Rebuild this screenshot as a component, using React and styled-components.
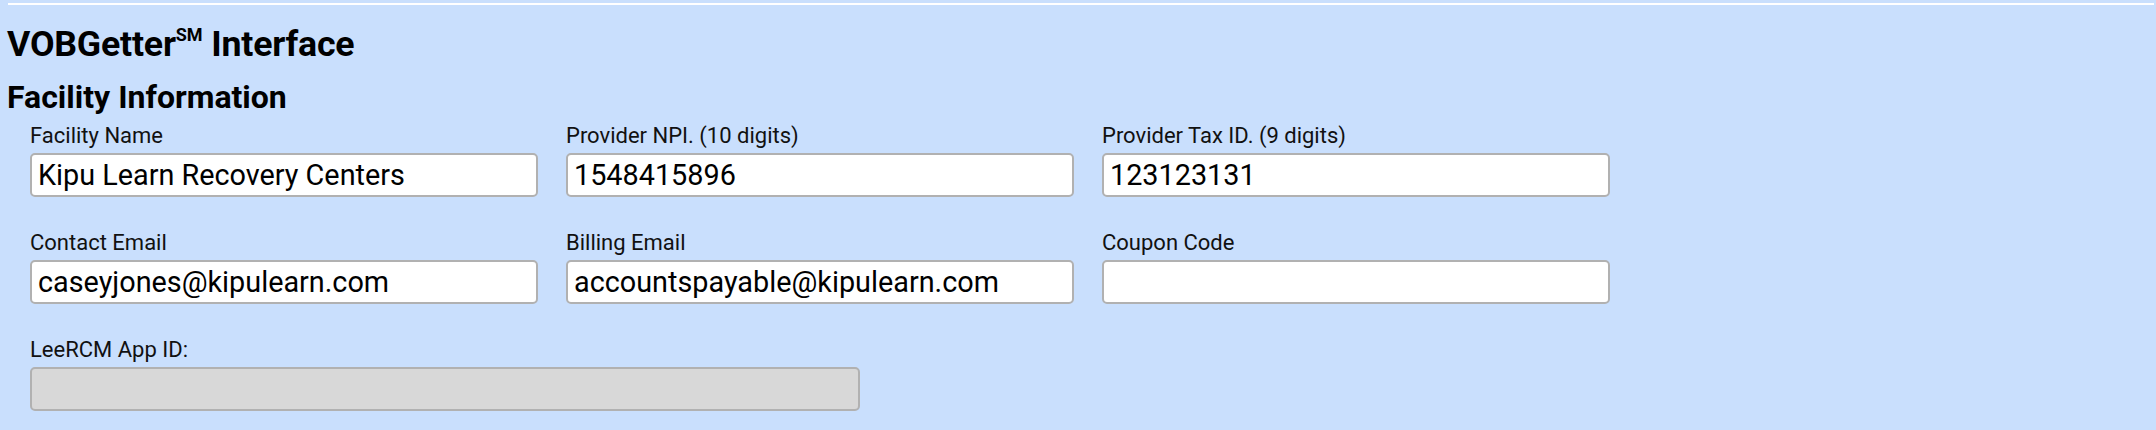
import React from 'react';
import styled, { createGlobalStyle } from 'styled-components';

const GlobalStyle = createGlobalStyle`
  html, body {
    margin: 0;
    padding: 0;
    background: #c9dffd;
  }
  body {
    font-family: Roboto, "Liberation Sans", sans-serif;
    color: #000;
  }
`;

const Page = styled.div`
  background: #c9dffd;
  min-height: 430px;
  padding: 3px 2px 0 8px;
  box-sizing: border-box;
`;

const TopRule = styled.div`
  height: 2px;
  background: #fff;
`;

const Title = styled.h1`
  margin: 18px 0 0 -1px;
  font-size: 35.7px;
  font-weight: 700;
  line-height: 42px;
  letter-spacing: -0.2px;

  sup {
    font-size: 18px;
    line-height: 0;
    vertical-align: 15px;
    letter-spacing: 0;
  }
`;

const SectionTitle = styled.h2`
  margin: 14px 0 0 -1px;
  font-size: 32px;
  font-weight: 700;
  line-height: 37px;
`;

const Fields = styled.div`
  display: grid;
  grid-template-columns: repeat(3, 508px);
  column-gap: 28px;
  row-gap: 34px;
  padding: 8px 0 0 22px;
`;

const Field = styled.div`
  display: flex;
  flex-direction: column;
  grid-column: ${(p) => (p.$wide ? '1 / span 2' : 'auto')};
  width: ${(p) => (p.$wide ? '830px' : '508px')};
`;

const Label = styled.label`
  font-size: 22px;
  line-height: 24px;
  margin-bottom: 5px;
  color: #111;
`;

const Input = styled.input`
  box-sizing: border-box;
  height: 44px;
  width: 100%;
  padding: 0 6px;
  border: 2px solid #b1b1b1;
  border-radius: 5px;
  background: ${(p) => (p.readOnly ? '#d8d8d8' : '#fff')};
  font-family: Roboto, "Liberation Sans", sans-serif;
  font-size: 28.8px;
  color: #000;
  outline: none;
`;

const fields = [
  { label: 'Facility Name', value: 'Kipu Learn Recovery Centers' },
  { label: 'Provider NPI. (10 digits)', value: '1548415896' },
  { label: 'Provider Tax ID. (9 digits)', value: '123123131' },
  { label: 'Contact Email', value: 'caseyjones@kipulearn.com' },
  { label: 'Billing Email', value: 'accountspayable@kipulearn.com' },
  { label: 'Coupon Code', value: '' },
];

export default function App() {
  return (
    <>
      <GlobalStyle />
      <Page>
        <TopRule />
        <Title>
          VOBGetter<sup>SM</sup> Interface
        </Title>
        <SectionTitle>Facility Information</SectionTitle>
        <Fields>
          {fields.map((f) => (
            <Field key={f.label}>
              <Label>{f.label}</Label>
              <Input defaultValue={f.value} />
            </Field>
          ))}
          <Field $wide>
            <Label>LeeRCM App ID:</Label>
            <Input readOnly defaultValue="" />
          </Field>
        </Fields>
      </Page>
    </>
  );
}
